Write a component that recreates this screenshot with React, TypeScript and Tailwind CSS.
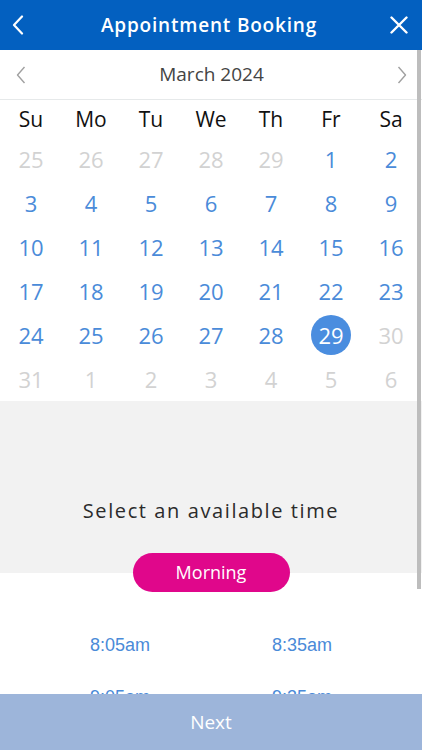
const days = ['Su', 'Mo', 'Tu', 'We', 'Th', 'Fr', 'Sa']

const weeks: { d: number; muted?: boolean }[][] = [
  [{ d: 25, muted: true }, { d: 26, muted: true }, { d: 27, muted: true }, { d: 28, muted: true }, { d: 29, muted: true }, { d: 1 }, { d: 2 }],
  [{ d: 3 }, { d: 4 }, { d: 5 }, { d: 6 }, { d: 7 }, { d: 8 }, { d: 9 }],
  [{ d: 10 }, { d: 11 }, { d: 12 }, { d: 13 }, { d: 14 }, { d: 15 }, { d: 16 }],
  [{ d: 17 }, { d: 18 }, { d: 19 }, { d: 20 }, { d: 21 }, { d: 22 }, { d: 23 }],
  [{ d: 24 }, { d: 25 }, { d: 26 }, { d: 27 }, { d: 28 }, { d: 29 }, { d: 30, muted: true }],
  [{ d: 31, muted: true }, { d: 1, muted: true }, { d: 2, muted: true }, { d: 3, muted: true }, { d: 4, muted: true }, { d: 5, muted: true }, { d: 6, muted: true }],
]

const times = ['8:05am', '8:35am', '9:05am', '9:35am']

export default function App() {
  return (
    <div className="relative h-[750px] w-[422px] flex flex-col overflow-hidden bg-white" style={{ fontFamily: '"Open Sans", sans-serif' }}>
      {/* header */}
      <div className="h-[50px] bg-[#0360c0] flex items-center justify-between px-[12px] shrink-0">
        <svg width="12" height="20" viewBox="0 0 12 20" fill="none">
          <polyline points="10,1.5 2,10 10,18.5" stroke="white" strokeWidth="2.2" strokeLinecap="round" strokeLinejoin="round" />
        </svg>
        <div className="text-white text-[19px] font-semibold tracking-[0.8px] leading-none ml-[4px]">Appointment Booking</div>
        <svg width="18" height="18" viewBox="0 0 18 18" fill="none" className="mr-[2px]">
          <path d="M1.5 1.5 L16.5 16.5 M16.5 1.5 L1.5 16.5" stroke="white" strokeWidth="2.4" strokeLinecap="round" />
        </svg>
      </div>

      <div className="flex-1 overflow-hidden">
        {/* month bar */}
        <div className="h-[50px] flex items-center justify-between px-[16px] border-b border-[#e6e9ea]">
          <svg width="10" height="18" viewBox="0 0 10 18" fill="none">
            <polyline points="8.5,1 1.5,9 8.5,17" stroke="#a0a0a0" strokeWidth="1.4" strokeLinejoin="round" />
          </svg>
          <div className="text-[19px] text-[#444] leading-none">March 2024</div>
          <svg width="10" height="18" viewBox="0 0 10 18" fill="none" className="mr-[-1px]">
            <polyline points="1.5,1 8.5,9 1.5,17" stroke="#a0a0a0" strokeWidth="1.4" strokeLinejoin="round" />
          </svg>
        </div>

        {/* calendar */}
        <div className="ml-[1px] w-[420px]">
          <div className="grid grid-cols-7 h-[37px] pt-[2px]">
            {days.map((d) => (
              <div key={d} className="text-center text-[21px] leading-[35px] text-[#111]">{d}</div>
            ))}
          </div>
          {weeks.map((w, i) => (
            <div key={i} className="grid grid-cols-7 h-[44px]">
              {w.map((c, j) => {
                const selected = !c.muted && c.d === 29
                return (
                  <div key={j} className="flex items-center justify-center">
                    {selected ? (
                      <div className="w-[40px] h-[40px] rounded-full bg-[#4a8ddf] text-white flex items-center justify-center text-[22px] leading-none">{c.d}</div>
                    ) : (
                      <span className={`text-[22px] leading-none ${c.muted ? 'text-[#d2d2d2]' : 'text-[#4a8bd9]'}`}>{c.d}</span>
                    )}
                  </div>
                )
              })}
            </div>
          ))}
        </div>

        {/* time picker heading */}
        <div className="bg-[#f2f2f2] pt-[96px] flex flex-col items-center">
          <div className="text-[20px] leading-[28px] tracking-[1.6px] text-[#2b2b2b]">Select an available time</div>
          <div className="mt-[28px] -mb-[19px] relative z-10 w-[157px] h-[39px] rounded-full bg-[#e0078b] text-white text-[18px] flex items-center justify-center">Morning</div>
        </div>

        {/* times */}
        <div className="grid grid-cols-2 px-[29px] pt-[60px] gap-y-[28px]" style={{ fontFamily: '"Liberation Sans", Arial, sans-serif' }}>
          {times.map((t) => (
            <div key={t} className="text-center text-[18px] leading-[24px] text-[#4a8ad8]">{t}</div>
          ))}
        </div>
      </div>

      {/* footer */}
      <div className="h-[56px] bg-[#9db5da] flex items-center justify-center shrink-0">
        <span className="text-white text-[19px] leading-none">Next</span>
      </div>

      {/* scrollbar */}
      <div className="absolute right-[1px] top-[50px] w-[4px] h-[539px] bg-[#bdbdbd]" />
    </div>
  )
}
